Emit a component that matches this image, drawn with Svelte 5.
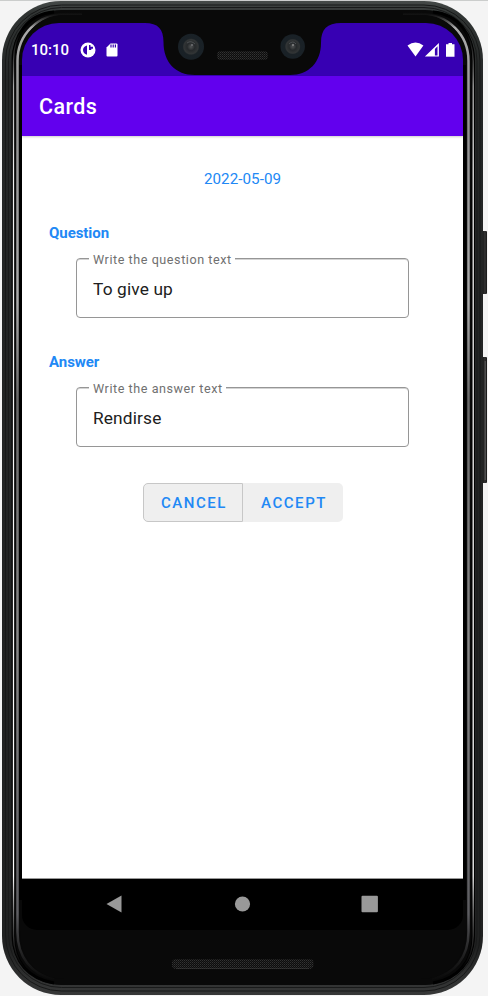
<script>
  let question = $state('To give up');
  let answer = $state('Rendirse');
  let fields = $derived([
    { title: 'Question', hint: 'Write the question text', value: question, gap: 146 },
    { title: 'Answer', hint: 'Write the answer text', value: answer, gap: 137 }
  ]);
</script>

<div class="stage">
  <svg class="shell" width="488" height="996" viewBox="0 0 488 996" aria-hidden="true">
    <defs>
      <linearGradient id="rim" x1="0" y1="0" x2="0" y2="1">
        <stop offset="0" stop-color="#464b49" />
        <stop offset="0.012" stop-color="#303433" />
        <stop offset="0.08" stop-color="#242626" />
        <stop offset="0.95" stop-color="#202121" />
        <stop offset="1" stop-color="#373838" />
      </linearGradient>
      <linearGradient id="shine" gradientUnits="userSpaceOnUse" x1="0" y1="12" x2="0" y2="982">
        <stop offset="0" stop-color="#777" stop-opacity="0" />
        <stop offset="0.003" stop-color="#777" stop-opacity="0.1" />
        <stop offset="0.016" stop-color="#aaa" />
        <stop offset="0.12" stop-color="#929292" />
        <stop offset="0.3" stop-color="#aaa" />
        <stop offset="0.4" stop-color="#696969" />
        <stop offset="0.65" stop-color="#888" />
        <stop offset="0.93" stop-color="#5d5d61" />
        <stop offset="1" stop-color="#333" stop-opacity="0" />
      </linearGradient>
      <linearGradient id="edge" gradientUnits="userSpaceOnUse" x1="0" y1="30" x2="0" y2="970">
        <stop offset="0" stop-color="#555" stop-opacity="0" />
        <stop offset="0.06" stop-color="#aaa" />
        <stop offset="0.15" stop-color="#f0f0f0" />
        <stop offset="0.9" stop-color="#fff" />
        <stop offset="1" stop-color="#555" stop-opacity="0" />
      </linearGradient>
      <linearGradient id="key" x1="0" y1="0" x2="1" y2="0">
        <stop offset="0" stop-color="#111" />
        <stop offset="0.6" stop-color="#353535" />
        <stop offset="1" stop-color="#151515" />
      </linearGradient>
    </defs>
    <rect width="488" height="1" fill="#cbcdcc" />
    <rect x="482" y="231" width="5" height="63" rx="1" fill="url(#key)" />
    <rect x="482" y="357" width="5" height="126" rx="1" fill="url(#key)" />
    <path d="M485.2 361V480" stroke="#696969" stroke-width=".8" />
    <rect x="2" y="1" width="481" height="994" rx="59" fill="url(#rim)" />
    <rect x="5.500" y="5" width="474.500" height="986" rx="56" fill="none" stroke="#171818" />
    <rect x="8.500" y="7.500" width="468.500" height="980" rx="53" fill="none" stroke="#191a1a" />
    <rect x="11.500" y="10" width="463.500" height="975" rx="50" fill="#090909" />
    <g fill="none">
      <path d="M54 12C28 14 13.500 34 13.500 61V936C13.500 962 29 979 54 983M433 12C458 14 473.200 34 473.200 61V936C473.200 962 457 979 433 983" stroke="#000" stroke-width="3" />
      <path d="M54 12C28 14 13.500 34 13.500 61V936C13.500 962 29 979 54 983M433 12C458 14 473.200 34 473.200 61V936C473.200 962 457 979 433 983" stroke="url(#edge)" stroke-width="1.300" />
      <path d="M82 14H65C38 14.500 17.500 34 17.500 61V932C17.500 957 31 974 54 979M403 14H421C448 14.500 468.500 34 468.500 61V932C468.500 957 455 974 432 979" stroke="url(#shine)" stroke-width="2.500" />
    </g>
    <path d="M20 61C20 36 38 15 63 15H423C448 15 466 36 466 61V931C466 958 449 979 420 979H65C36 979 20 958 20 931Z" fill="#090909" />
    <path d="M20.500 65V900M464.500 65V900" stroke="#000" stroke-width="3" />
  </svg>

  <div class="screen">
    <header class="status">
      <time>10:10</time>
      <svg class="disc" width="16" height="16" viewBox="0 0 16 16"><circle cx="8" cy="8" r="7.500" fill="#fff" /><path d="M7 3.500V12.700Q3 11.500 3 8Q3 4.500 7 3.500Z" fill="#3700b3" /><path d="M9 3H10.500V4.800H13V6.800H11.300V8H9Z" fill="#3700b3" /></svg>
      <svg class="sd" width="12" height="14" viewBox="0 0 12 14"><path d="M4.500.5H10.500Q11.500.5 11.500 1.500V12.500Q11.500 13.500 10.500 13.500H1.500Q.5 13.500.5 12.500V4.500Z" fill="#fff" /><path d="M5 1.500V4.500M7.200 1.500V4.500M9.400 1.500V4.500" stroke="#3700b3" stroke-width="1.200" /></svg>
      <div class="spacer"></div>
      <svg width="51" height="18" viewBox="407 40 51 18"><path d="M407.500 44.500Q415.500 38.500 423.400 44.500L415.500 55.500Z" fill="#fff" /><path fill-rule="evenodd" d="M438.900 42V55.500H424.900ZM434.900 48V54.500H437.500V45.300Z" fill="#fff" /><path d="M446 43.200H448.500V42H452V43.200H454.500V55.700H446Z" fill="#fff" /></svg>
    </header>
    <div class="appbar"><h1>Cards</h1></div>

    <main>
      <div class="date">2022-05-09</div>
      {#each fields as field (field.title)}
        <section>
          <h2>{field.title}</h2>
          <div class="field">
            <span class="value">{field.value}</span>
            <span class="hint" style:width="{field.gap}px">{field.hint}</span>
          </div>
        </section>
      {/each}
      <div class="actions">
        <button class="cancel">CANCEL</button><button class="accept">ACCEPT</button>
      </div>
    </main>

    <nav>
      <svg width="18" height="18" viewBox="0 0 18 18"><path d="M1.500 9 16.500.5V17.500Z" fill="#999" /></svg>
      <svg width="18" height="18" viewBox="0 0 18 18"><circle cx="9.500" cy="9" r="7.600" fill="#999" /></svg>
      <svg width="18" height="18" viewBox="0 0 18 18"><rect x=".5" y=".8" width="16.400" height="16.400" rx="1" fill="#999" /></svg>
    </nav>
  </div>

  <svg class="hardware" width="488" height="996" viewBox="0 0 488 996" aria-hidden="true">
    <defs>
      <pattern id="mesh" width="2" height="2" patternUnits="userSpaceOnUse"><rect width="2" height="2" fill="#0d0d0d" /><rect width="1" height="1" fill="#333" /><rect x="1" y="1" width="1" height="1" fill="#222" /></pattern>
      <radialGradient id="lens"><stop offset="0" stop-color="#515354" /><stop offset=".3" stop-color="#26292b" /><stop offset=".55" stop-color="#323536" /><stop offset=".65" stop-color="#1a2126" /><stop offset="1" stop-color="#192127" /></radialGradient>
    </defs>
    <path d="M145 22V23C158 23 163.500 29 163.500 42C163.500 62 175 75 195 75H290C309 75 321 62 321 43C321 29 327 23 341 23V22Z" fill="#090909" />
    <circle cx="191" cy="46.700" r="13" fill="url(#lens)" />
    <circle cx="292.700" cy="46.500" r="12.200" fill="url(#lens)" />
    <path d="M187 43Q191 40 195 44M289 44Q293 40 296 44" fill="none" stroke="#54585a" stroke-width=".8" />
    <circle cx="192" cy="45" r="1" fill="#707274" /><circle cx="293" cy="45" r="1" fill="#888" />
    <rect x="217" y="51" width="51" height="9" rx="4" fill="url(#mesh)" />
    <rect x="172" y="959" width="141.500" height="10" rx="4" fill="url(#mesh)" />
    <path d="M177 968.500H309" stroke="#383838" stroke-width=".7" />
  </svg>
</div>

<style>
  :global(body) { margin: 0; background: #f4f4f4; }
  .stage { position: relative; box-sizing: border-box; width: 488px; height: 996px; padding: 23px 25px 66px 22px; overflow: hidden; font-family: Roboto, sans-serif; }
  .shell, .hardware { position: absolute; top: 0; left: 0; pointer-events: none; }
  .screen { position: relative; display: flex; flex-direction: column; width: 441px; height: 907px; overflow: hidden; border-radius: 37px 37px 15px 15px; }
  .status { display: flex; align-items: center; box-sizing: border-box; height: 53px; padding: 1px 5px 0 9px; background: #3700b3; color: #fff; }
  time { width: 49px; font-size: 15px; font-weight: 500; letter-spacing: 0; line-height: 18px; }
  .disc { margin-right: 9.500px; }
  .spacer { flex: 1; }
  .appbar { display: flex; align-items: center; height: 60px; padding-left: 17px; background: #6200ee; color: #fff; box-shadow: 0 1px 2px #0003; z-index: 1; }
  h1 { margin: 2px 0 0; font-size: 21.500px; font-weight: 500; letter-spacing: .4px; line-height: 26px; }
  main { flex: 1; display: flex; flex-direction: column; background: #fff; color: #2188f5; }
  .date { margin-top: 33px; height: 20px; text-align: center; font-size: 15.200px; line-height: 20px; letter-spacing: .05px; }
  section { height: 129px; padding: 0 54px 0 27px; }
  .date + section { margin-top: 33px; }
  h2 { margin: 0; height: 20px; padding-top: 1px; box-sizing: border-box; font-size: 15px; font-weight: 700; line-height: 20px; letter-spacing: -.05px; }
  .field { position: relative; display: flex; align-items: center; box-sizing: border-box; width: 333px; height: 60px; margin: 16px 0 0 27px; padding: 2px 16px 0; border: 1px solid #969696; border-radius: 4px; box-shadow: inset 0 1px #d4d4d4; }
  .value { color: #202020; font-size: 17.300px; letter-spacing: .15px; line-height: 22px; }
  .hint { position: absolute; left: 12px; top: -8px; box-sizing: border-box; padding-left: 4px; background: #fff; color: #707070; font-size: 12.600px; letter-spacing: .55px; line-height: 17px; white-space: nowrap; }
  .actions { display: flex; margin: 3px 0 0 121px; }
  button { box-sizing: border-box; height: 39px; padding: 1px 0 0 2px; border: 0; background: #efefef; color: #2188f5; font: 500 15px/20px Roboto, sans-serif; letter-spacing: 1.550px; }
  .cancel { width: 100px; border: 1px solid #c7c7c7; border-radius: 5px 0 0 5px; }
  .accept { width: 100px; border-radius: 0 5px 5px 0; }
  nav { display: flex; align-items: center; justify-content: space-between; box-sizing: border-box; height: 52px; padding: 0 84px 2px 83px; border-top: 1px solid #999; background: #000; }
</style>
